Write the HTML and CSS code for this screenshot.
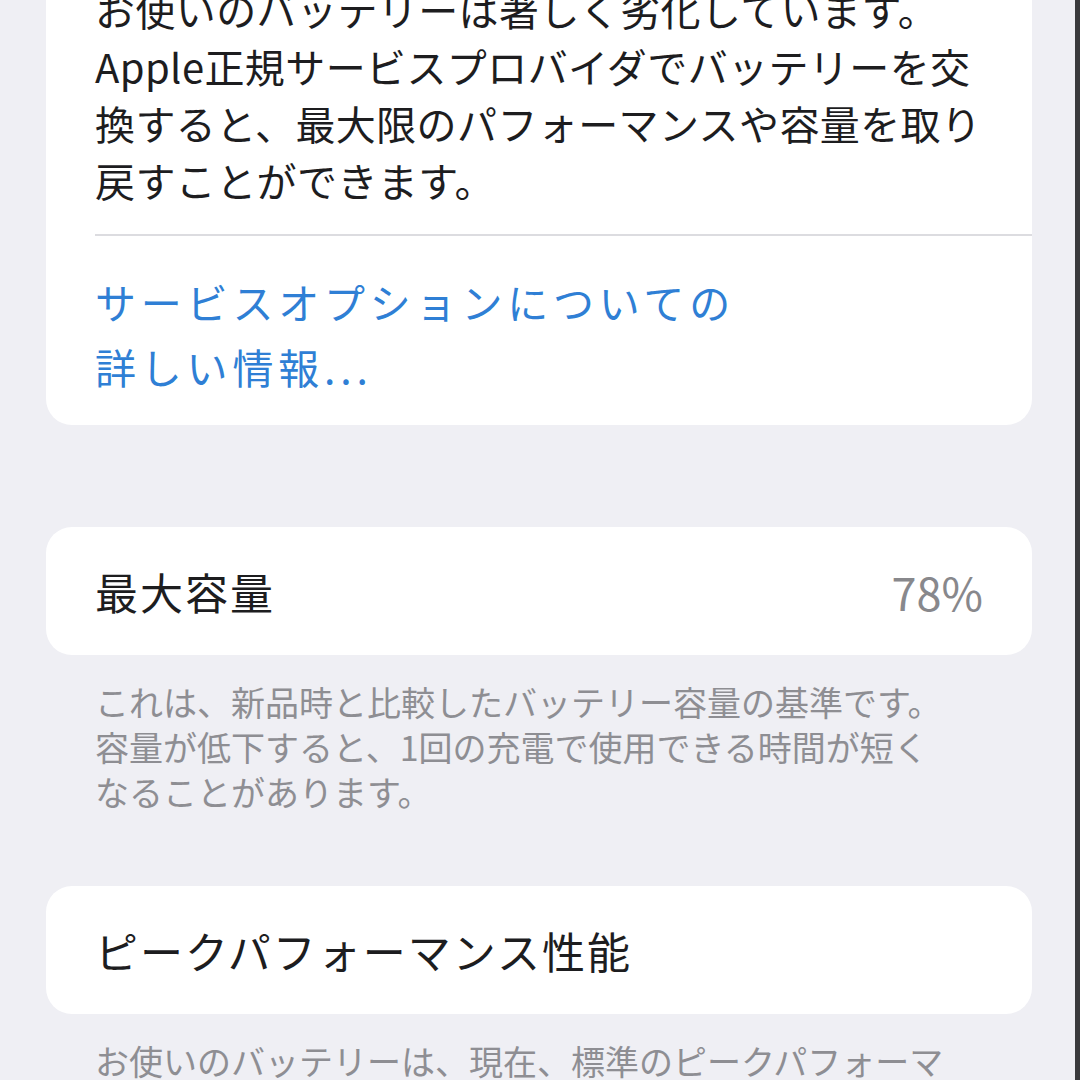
FILE: index.html
```html
<!DOCTYPE html>
<html lang="ja">
<head>
    <meta charset="UTF-8">
    <meta name="viewport" content="width=device-width, initial-scale=1.0">
    <title>バッテリーの状態</title>
    <link rel="stylesheet" href="styles.css">
</head>
<body>

<main class="page">
    <section class="group">
        <p class="cell-text">お使いのバッテリーは著しく劣化しています。<br>Apple正規サービスプロバイダでバッテリーを交<br>換すると、最大限のパフォーマンスや容量を取り<br>戻すことができます。</p>
        <div class="separator"></div>
        <a href="#" class="cell-link">サービスオプションについての<br>詳しい情報...</a>
    </section>

    <section class="group row">
        <span class="row-label">最大容量</span>
        <span class="row-value">78%</span>
    </section>
    <p class="footnote">これは、新品時と比較したバッテリー容量の基準です。<br>容量が低下すると、1回の充電で使用できる時間が短く<br>なることがあります。</p>

    <section class="group row">
        <span class="row-label">ピークパフォーマンス性能</span>
    </section>
    <p class="footnote">お使いのバッテリーは、現在、標準のピークパフォーマンスに対応しています。</p>
</main>

<div class="edge"></div>

</body>
</html>
```

FILE: styles.css
```css
body {
    font-family: "Noto Sans CJK JP", "Noto Sans", sans-serif;
    background-color: #efeff4;
    color: #1d1d1f;
    margin: 0;
    padding: 0;
    overflow: hidden;
    height: 1080px;
}

.page {
    padding: 0 48px 0 46px;
    margin-top: -49px;
}

.group {
    background-color: #ffffff;
    border-radius: 26px;
}

.cell-text {
    margin: 0;
    padding: 30px 20px 25px 49px;
    font-size: 40px;
    line-height: 57px;
    letter-spacing: 0.4px;
    white-space: nowrap;
}

.separator {
    height: 2px;
    background-color: #dcdce0;
    margin-left: 49px;
}

.cell-link {
    display: block;
    padding: 33px 49px 26px 49px;
    font-size: 41px;
    line-height: 65px;
    letter-spacing: 4.8px;
    color: #2f7fd5;
    text-decoration: none;
}

.row {
    display: flex;
    justify-content: space-between;
    align-items: center;
    height: 128px;
    padding: 0 49px;
    margin-top: 102px;
    font-size: 43px;
}

.row-label {
    letter-spacing: 2px;
}

.row-value {
    color: #88888c;
    font-size: 45px;
}

.footnote {
    margin: 24px 0 0 0;
    padding: 0 80px 0 49px;
    font-size: 34px;
    line-height: 45px;
    color: #8e8e93;
}

.footnote + .row {
    margin-top: 72px;
}

.edge {
    position: fixed;
    top: 0;
    right: 0;
    width: 5px;
    height: 100%;
    background-color: #3a3a3c;
}
```
